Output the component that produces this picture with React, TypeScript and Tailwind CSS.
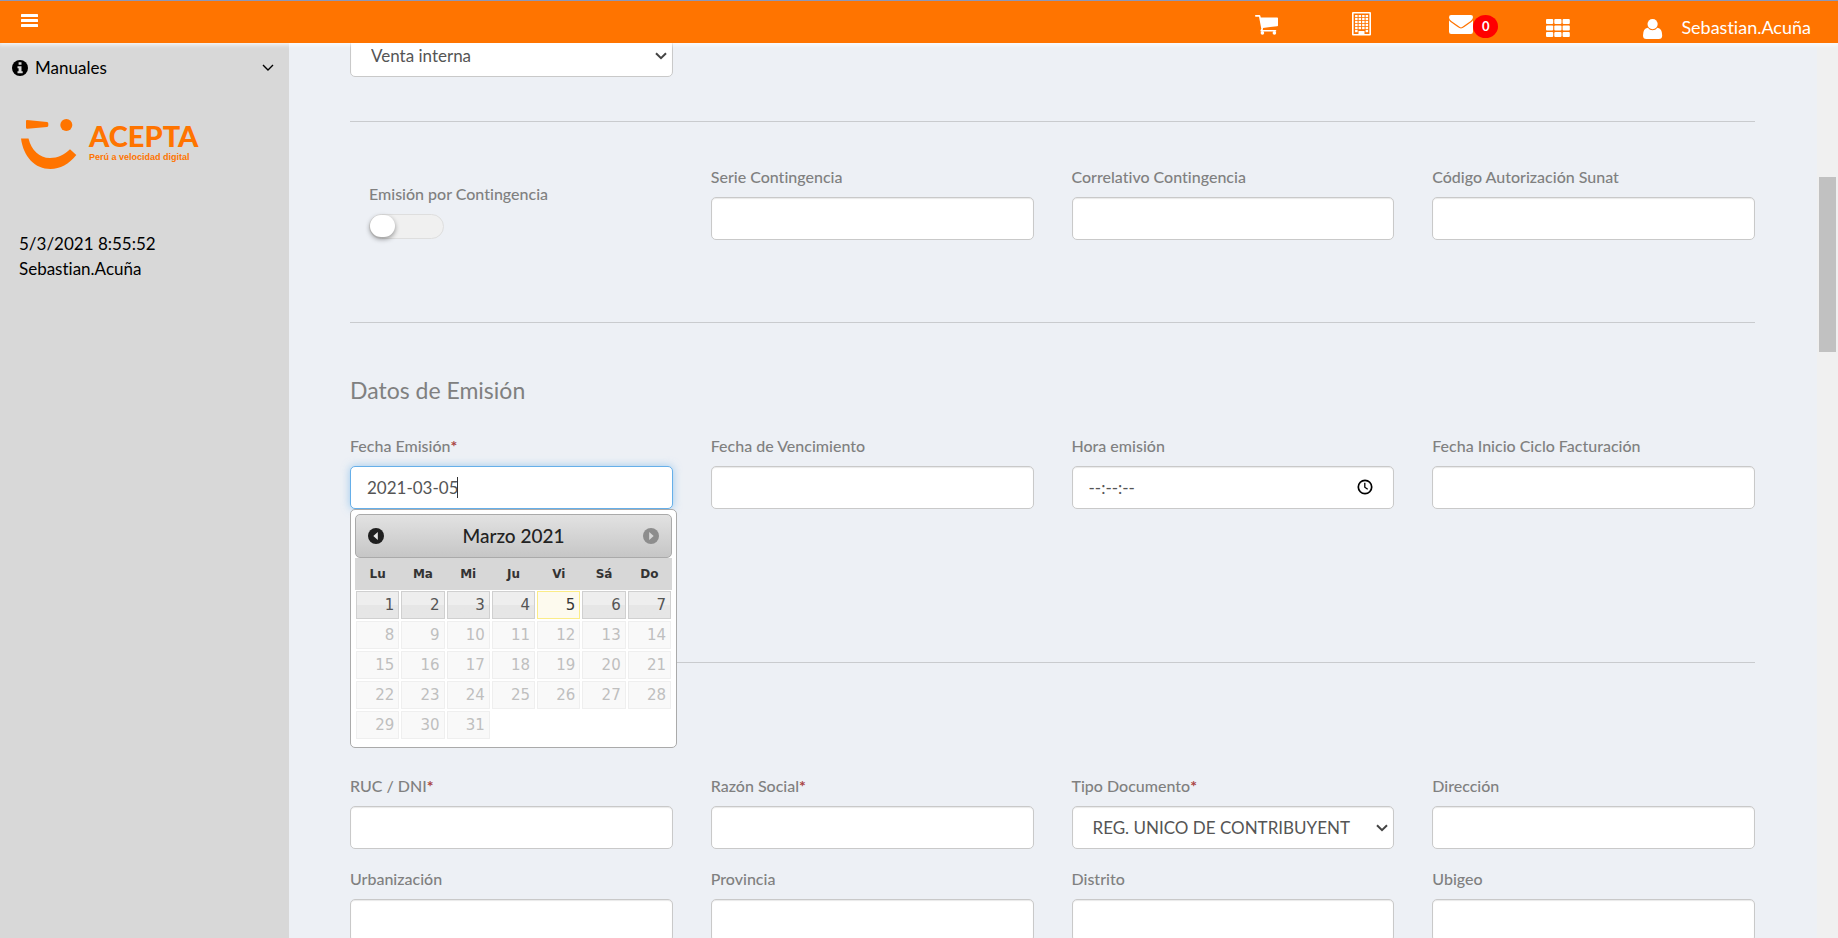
import React from "react";

const field =
  "block h-[43px] w-full rounded-[5px] border border-[#c9c9c9] bg-white px-4 text-[17px] text-[#555] shadow-[inset_0_1px_1px_rgba(0,0,0,0.09)] outline-none";

const slug = (s: string) => s.toLowerCase().replace(/[^a-zñáéíóú]+/g, "-");

function Label({ text, required }: { text: string; required?: boolean }) {
  return (
    <label htmlFor={slug(text)} className="mb-[9px] block text-[16px] leading-[22px] font-medium whitespace-nowrap text-[#808080]">
      {text}
      {required && <span className="font-bold text-[#a94442]">*</span>}
    </label>
  );
}

function TextField({ text, required }: { text: string; required?: boolean }) {
  return (
    <div className="h-[93px]">
      <Label text={text} required={required} />
      <input id={slug(text)} type="text" className={field} />
    </div>
  );
}

function Dropdown({ id, label, option }: { id: string; label?: string; option: string }) {
  return (
    <div className="relative">
      <select id={id} aria-label={label} className={`${field} appearance-none pr-[37px] pl-5`}>
        <option>{option}</option>
      </select>
      <svg viewBox="0 0 12 8" className="pointer-events-none absolute top-[18px] right-[6px] h-2 w-3" fill="none" stroke="#444" strokeWidth="2">
        <path d="M1 1.2 6 6.2 11 1.2" />
      </svg>
    </div>
  );
}

function CartIcon() {
  return (
    <svg viewBox="0 0 24 20" className="h-5 w-6" fill="currentColor">
      <path d="M.8 0H4.4Q5.2 0 5.4.9L5.8 2.4H22.2Q23 2.4 23 3.2V10.4Q23 11.1 22.2 11.2L7.9 12.9 8 13.8 7.7 14.9H20.4Q21.3 14.9 21.3 15.7T20.4 16.6H6.4Q5.4 16.6 5.4 15.7 5.4 15.2 6.3 13.7L4 1.7H.8Q0 1.7 0 .85T.8 0Z" />
      <circle cx="7.4" cy="17.9" r="1.8" />
      <circle cx="19.4" cy="17.9" r="1.8" />
    </svg>
  );
}

function BuildingIcon() {
  return (
    <svg viewBox="0 0 20 24" className="h-6 w-5">
      <path fill="currentColor" fillRule="evenodd" d="M1 0H18Q19 0 19 1V22.6Q19 23.6 18 23.6H1Q0 23.6 0 22.6V1Q0 0 1 0ZM1.6 1.6V22H6.5V19H12.5V22H17.4V1.6Z" />
      <g fill="currentColor">
        {[3, 6, 9, 12, 15].map((y) => [3.1, 6.6, 10.1, 13.6].map((x) => <rect key={`${x}-${y}`} x={x} y={y} width="2.5" height="2.2" />))}
        <rect x="3.1" y="18" width="2.5" height="2.2" />
        <rect x="13.6" y="18" width="2.5" height="2.2" />
      </g>
    </svg>
  );
}

function MailIcon() {
  return (
    <svg viewBox="0 0 24 19" className="h-[19px] w-6" fill="currentColor">
      <path d="M0 5.2Q.7 6.2 1.6 6.9L8.300 11.800Q10.600 13.400 12 13.400T15.700 11.800L22.400 6.900Q23.300 6.200 24 5.200V16.800Q24 19 21.800 19H2.200Q0 19 0 16.800Z" />
      <path d="M2.100 0H21.900Q24 0 24 2.100 24 4.400 21.700 6L14.900 10.700Q12.800 12.400 12 12.400T9.100 10.700L2.300 6Q0 4.200 0 2.400 0 0 2.100 0Z" />
    </svg>
  );
}

function GridIcon() {
  return (
    <svg viewBox="0 0 24 18" className="h-[18px] w-6" fill="currentColor">
      {[0, 6.5, 13].map((y) => [0, 8.3, 16.6].map((x) => <rect key={`${x}-${y}`} x={x} y={y} width="7.2" height="5" rx="1" />))}
    </svg>
  );
}

function UserIcon() {
  return (
    <svg viewBox="0 0 20 20" className="h-5 w-5" fill="currentColor">
      <circle cx="9.6" cy="5.1" r="5.1" />
      <path d="M4.8 8.8Q6.800 11.300 9.600 11.300T14.400 8.800Q19.200 9.600 19.200 16.500 19.200 20 15.800 20H3.400Q0 20 0 16.500 0 9.600 4.800 8.800Z" />
    </svg>
  );
}

function Header() {
  return (
    <header className="relative z-20 flex h-[43px] shrink-0 items-start border-t border-[#8c97b8] bg-[#ff7400] pr-[27px] pl-[21px] text-white shadow-[0_1px_4px_1px_rgba(255,255,255,0.8)]">
      <button aria-label="Menú" className="mt-[13px]">
        <svg viewBox="0 0 17 13" className="h-[13px] w-[17px]" fill="currentColor">
          <rect width="17" height="3" rx="0.6" />
          <rect y="5" width="17" height="3" rx="0.6" />
          <rect y="10" width="17" height="3" rx="0.6" />
        </svg>
      </button>
      <nav className="ml-auto flex items-start">
        <a href="#carrito" aria-label="Carrito" className="mt-[14px] mr-[73px]"><CartIcon /></a>
        <a href="#empresa" aria-label="Empresa" className="mt-[11px] mr-[77px]"><BuildingIcon /></a>
        <a href="#mensajes" aria-label="Mensajes" className="mr-12 flex items-start">
          <span className="mt-[14px]"><MailIcon /></span>
          <span className="mt-[14px] flex h-[23px] w-[25px] items-center justify-center rounded-[50%] bg-[#f00] text-[13px] font-bold">0</span>
        </a>
        <a href="#aplicaciones" aria-label="Aplicaciones" className="mt-[18px] mr-[73px]"><GridIcon /></a>
        <a href="#usuario" className="flex items-start gap-[18px]">
          <span className="mt-[18px]"><UserIcon /></span>
          <span className="mt-[14px] text-[18px] leading-6">Sebastian.Acuña</span>
        </a>
      </nav>
    </header>
  );
}

function Logo() {
  return (
    <div className="flex gap-3 text-[#ff7400]">
      <svg viewBox="0 0 56 50" className="h-[50px] w-14" fill="currentColor">
        <path d="M6 1Q5 1 5 2V8.500Q5 10 6.500 9.800L26 8Q27.300 7.800 27.300 6.500V4.500Q27.300 3.200 26 3Z" />
        <circle cx="45.300" cy="6" r="6" />
        <path d="M0 19.500H7.500C10.500 31 18 39 29 39 37 39 43 36 49 30.300L55.300 36C48 45 39 50 29.500 50 14 50 2.500 38 0 19.500Z" />
      </svg>
      <div className="pt-px">
        <div className="text-[29px] leading-8 font-black">ACEPTA</div>
        <div className="font-['Liberation_Sans',sans-serif] text-[9px] leading-[10px] font-bold whitespace-nowrap">Perú a velocidad digital</div>
      </div>
    </div>
  );
}

function Sidebar() {
  return (
    <aside className="w-[289px] shrink-0 bg-[#d8d8d8] text-[17px] text-black shadow-[0_0_4px_rgba(255,255,255,0.9)]">
      <button className="flex w-full items-center gap-[7px] pt-[13px] pr-[15px] pl-[12px] leading-6">
        <svg viewBox="0 0 16 16" className="h-4 w-4">
          <circle cx="8" cy="8" r="8" />
          <path fill="#d8d8d8" d="M6.600 2.300H9.500V4.800H6.600ZM5.500 6.200H9.500V11.300H10.700V13.300H5.500V11.300H6.600V8.200H5.500Z" />
        </svg>
        Manuales
        <svg viewBox="0 0 12 8" className="ml-auto h-2 w-3" fill="none" stroke="#000" strokeWidth="1.400">
          <path d="M1 1 6 6 11 1" />
        </svg>
      </button>
      <div className="pt-[39px] pl-[21px]"><Logo /></div>
      <div className="pt-[62px] pl-[19px] leading-[25px]">
        <p>5/3/2021 8:55:52</p>
        <p>Sebastian.Acuña</p>
      </div>
    </aside>
  );
}

const weeks = [
  [1, 2, 3, 4, 5, 6, 7],
  [8, 9, 10, 11, 12, 13, 14],
  [15, 16, 17, 18, 19, 20, 21],
  [22, 23, 24, 25, 26, 27, 28],
  [29, 30, 31],
];

function dayClass(day: number) {
  if (day === 5) return "border-[#fbec88] bg-[#fdfaee] text-[#363636]";
  if (day < 8) return "border-[#d0d0d0] bg-linear-to-b from-[#eeeeee] from-50% to-[#e6e6e6] to-50% text-[#555]";
  return "border-[#efefef] bg-[#f9f9f9] text-[#bfbfbf]";
}

function Arrow({ flip }: { flip?: boolean }) {
  return (
    <svg viewBox="0 0 16 16" className={flip ? "h-4 w-4 rotate-180" : "h-4 w-4"}>
      <circle cx="8" cy="8" r="8" fill={flip ? "#8d8d8d" : "#1f1f1f"} />
      <path d="M9.800 4V12L5.300 8Z" fill={flip ? "#d8d8d8" : "#e8e8e8"} />
    </svg>
  );
}

function Calendar() {
  return (
    <div className="absolute top-full left-0 z-10 h-[239px] w-[327px] rounded-[5px] border border-[#aaa] bg-white p-1">
      <div className="flex h-11 items-center justify-between rounded-[5px] border border-[#aaa] bg-linear-to-b from-[#e2e2e2] to-[#c6c6c6] px-3">
        <button aria-label="Anterior"><Arrow /></button>
        <span className="text-[19px] leading-6 font-medium text-[#222]">Marzo 2021</span>
        <button aria-label="Siguiente" disabled><Arrow flip /></button>
      </div>
      <table className="w-full table-fixed border-collapse font-['DejaVu_Sans',sans-serif]">
        <thead>
          <tr className="h-8 bg-[#d7d7d7] text-[12px] text-[#333]">
            {["Lu", "Ma", "Mi", "Ju", "Vi", "Sá", "Do"].map((d) => (
              <th key={d} scope="col" className="p-0 font-bold">{d}</th>
            ))}
          </tr>
        </thead>
        <tbody>
          {weeks.map((week) => (
            <tr key={week[0]}>
              {week.map((day) => (
                <td key={day} className="p-px">
                  <button disabled={day > 7} className={`block h-7 w-full border pr-1 text-right text-[15px] leading-[26px] ${dayClass(day)}`}>{day}</button>
                </td>
              ))}
            </tr>
          ))}
        </tbody>
      </table>
    </div>
  );
}

function Main() {
  const row = "grid grid-cols-4 gap-x-[38px]";
  return (
    <main className="min-w-0 flex-1 overflow-hidden bg-[#edf0f5] pr-[62px] pl-[61px]">
      <div className={`${row} -mt-[9px]`}>
        <Dropdown id="tipo-venta" label="Tipo de venta" option="Venta interna" />
      </div>
      <hr className="mt-11 border-[#c9cbce]" />
      <div className={`${row} pt-11`}>
        <div className="pt-[17px] pl-[19px]">
          <label htmlFor="contingencia" className="mb-[9px] block text-[16px] leading-[22px] font-medium whitespace-nowrap text-[#808080]">Emisión por Contingencia</label>
          <div className="relative h-[25px] w-[75px]">
            <input id="contingencia" type="checkbox" role="switch" className="peer block h-full w-full appearance-none rounded-full border border-[#dedede] bg-[#f0f0f0]" />
            <span className="pointer-events-none absolute top-px left-px h-[22px] w-[25px] rounded-full bg-white shadow-[0_2px_5px_rgba(0,0,0,0.4)] peer-checked:left-[49px]" />
          </div>
        </div>
        <TextField text="Serie Contingencia" />
        <TextField text="Correlativo Contingencia" />
        <TextField text="Código Autorización Sunat" />
      </div>
      <hr className="mt-[63px] border-[#c9cbce]" />
      <h2 className="mt-[52px] text-[23px] leading-[30px] text-[#808080]">Datos de Emisión</h2>
      <div className={`${row} mt-[30px]`}>
        <div className="relative h-[74px]">
          <Label text="Fecha Emisión" required />
          <div className="relative">
            <input
              id="fecha-emisión"
              type="text"
              defaultValue="2021-03-05"
              className="block h-[43px] w-full rounded-[5px] border border-[#66afe9] bg-white px-4 text-[17px] text-[#555] shadow-[0_0_8px_rgba(102,175,233,0.6)] outline-none"
            />
            <span className="absolute top-[11px] left-[107px] h-[21px] w-px bg-[#333]" />
          </div>
          <Calendar />
        </div>
        <TextField text="Fecha de Vencimiento" />
        <div>
          <Label text="Hora emisión" />
          <div className="relative">
            <input id="hora-emisión" type="text" defaultValue="--:--:--" className={field} />
            <button aria-label="Elegir hora" className="absolute top-[13px] right-[21px]">
              <svg viewBox="0 0 16 16" className="h-4 w-4" fill="none" stroke="#000" strokeWidth="1.700">
                <circle cx="8" cy="8" r="6.700" />
                <path d="M7.800 3.800V8.200L10.700 10.200" strokeWidth="1.300" />
              </svg>
            </button>
          </div>
        </div>
        <TextField text="Fecha Inicio Ciclo Facturación" />
      </div>
      <hr className="mt-[134px] border-[#c9cbce]" />
      <div className={`${row} mt-[112px]`}>
        <TextField text="RUC / DNI" required />
        <TextField text="Razón Social" required />
        <div>
          <Label text="Tipo Documento" required />
          <Dropdown id="tipo-documento" option="REG. UNICO DE CONTRIBUYENT" />
        </div>
        <TextField text="Dirección" />
        <TextField text="Urbanización" />
        <TextField text="Provincia" />
        <TextField text="Distrito" />
        <TextField text="Ubigeo" />
      </div>
    </main>
  );
}

export default function App() {
  return (
    <div className="flex h-screen flex-col overflow-hidden font-[Lato,sans-serif] [font-variant-ligatures:none]">
      <Header />
      <div className="flex min-h-0 flex-1">
        <Sidebar />
        <Main />
        <div className="w-[21px] shrink-0 bg-[#f0f0f0] px-[2px] pt-[134px]">
          <div className="h-[175px] bg-[#c1c1c1]" />
        </div>
      </div>
    </div>
  );
}
